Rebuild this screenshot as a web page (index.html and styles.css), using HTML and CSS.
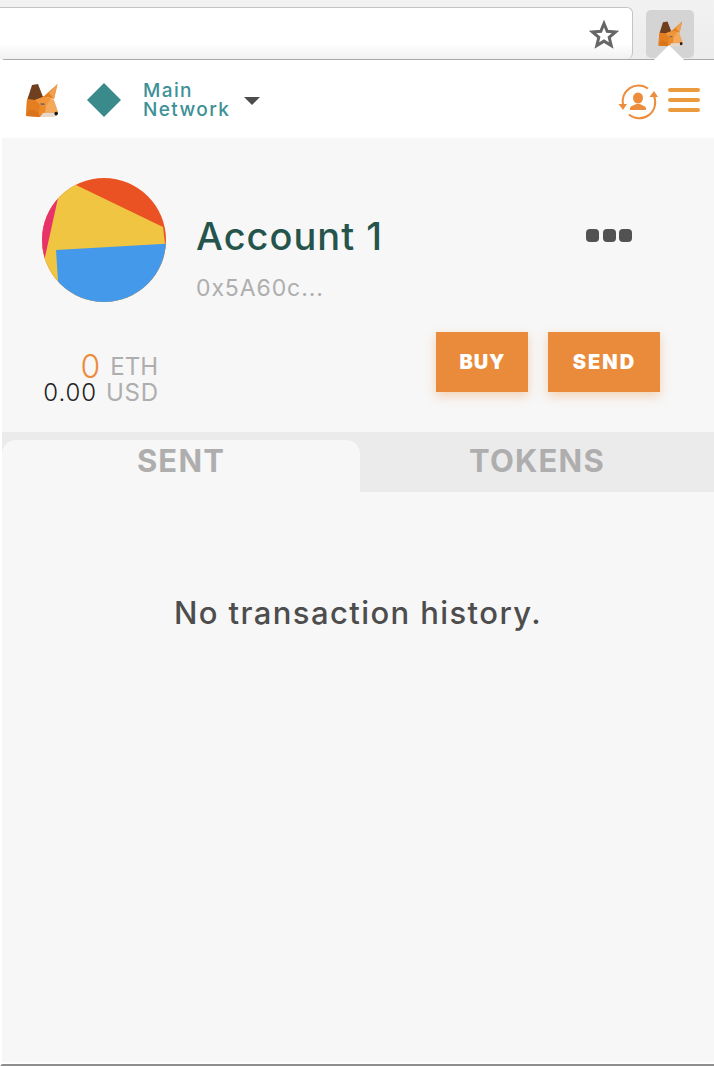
FILE: index.html
```html
<!DOCTYPE html>
<html lang="en">
<head>
    <meta charset="UTF-8">
    <meta name="viewport" content="width=device-width, initial-scale=1.0">
    <title>MetaMask</title>
    <link rel="stylesheet" href="styles.css">
</head>
<body>
<svg class="defs" width="0" height="0">
    <defs>
        <g id="fox">
            <polygon points="9,23 25,20 35,24 40,36 38,40 22,41 8,40" fill="#ea8a2a"/>
            <polygon points="25,21 39.5,8 36,23 33,22" fill="#e47f20"/>
            <polygon points="31,17 39.5,8 36,23" fill="#f0a050"/>
            <polygon points="9.5,23 14,9 20,8 25,21 17,24" fill="#6f3f1e"/>
            <polygon points="17,24 25,21 33,22 28,30 22,29" fill="#f0953a"/>
            <polygon points="8,40 9,24 17,24 22,29 20,40" fill="#e57e20"/>
            <polygon points="8,40 12,33 20,36 22,41" fill="#d9741c"/>
            <polygon points="28,30 33,22 36,24 40,36 27,37" fill="#f3a85a"/>
            <polygon points="25,37 39,36.5 36,41 22,41" fill="#e6d8cc"/>
            <polygon points="22,27.5 26,27 27,29 23,29" fill="#7a6a60"/>
            <circle cx="38.2" cy="37.6" r="1.8" fill="#161616"/>
        </g>
    </defs>
</svg>

<div class="chrome">
    <div class="address-bar">
        <svg class="star" viewBox="0 0 30 30" width="30" height="30">
            <polygon points="15,3.5 18.2,11.3 26.6,11.9 20.2,17.3 22.2,25.5 15,21.1 7.8,25.5 9.8,17.3 3.4,11.9 11.8,11.3" fill="none" stroke="#666" stroke-width="3"/>
        </svg>
    </div>
    <div class="ext-button">
        <svg viewBox="6 6 36 36" width="27" height="27"><use href="#fox"/></svg>
    </div>
</div>
<div class="caret"></div>

<div class="popup">
    <nav class="app-bar">
        <svg class="logo" viewBox="6 6 36 36" width="36" height="36"><use href="#fox"/></svg>
        <div class="network">
            <div class="diamond"></div>
            <div class="network-name">Main<br>Network</div>
            <div class="arrow-down"></div>
        </div>
        <div class="app-actions">
            <svg class="switch-icon" viewBox="0 0 40 40" width="40" height="40">
                <path d="M5 24 A16 16 0 0 1 30 7.5" fill="none" stroke="#ec8c3c" stroke-width="2"/>
                <path d="M36 15 A16 16 0 0 1 11 33.5" fill="none" stroke="#ec8c3c" stroke-width="2"/>
                <polygon points="0.5,23 9,23 5,29" fill="#ec8c3c"/>
                <polygon points="31.5,16 40,16 36,10" fill="#ec8c3c"/>
                <ellipse cx="20" cy="17" rx="5" ry="5.5" fill="#ec8c3c"/>
                <path d="M12 29 L12 27 C13 24.5 16 24.5 18 23 L22 23 C24 24.5 27 24.5 28 27 L28 29 Z" fill="#ec8c3c"/>
            </svg>
            <div class="menu-icon">
                <span></span><span></span><span></span>
            </div>
        </div>
    </nav>

    <section class="account">
        <div class="account-top">
            <svg class="identicon" viewBox="0 0 124 124" width="124" height="124">
                <defs><clipPath id="round"><circle cx="62" cy="62" r="62"/></clipPath></defs>
                <g clip-path="url(#round)">
                    <rect width="124" height="124" fill="#ea5123"/>
                    <polygon points="-5,-5 34,7 121,49 130,124 0,124 -5,124" fill="#f0c541"/>
                    <polygon points="16,20 3,79 -10,124 -10,-5" fill="#e8326a"/>
                    <polygon points="14,72 130,65.5 130,130 17,130 16,103" fill="#4499ea"/>
                </g>
            </svg>
            <div class="account-info">
                <div class="account-name">Account 1</div>
                <div class="account-address">0x5A60c...</div>
            </div>
            <div class="more-dots"><span></span><span></span><span></span></div>
        </div>
        <div class="account-bottom">
            <div class="balance">
                <div class="balance-row balance-eth"><span class="eth-value">0</span><span class="unit">ETH</span></div>
                <div class="balance-row"><span class="usd-value">0.00</span><span class="unit unit-usd">USD</span></div>
            </div>
            <div class="buttons">
                <button class="btn btn-buy">BUY</button>
                <button class="btn btn-send">SEND</button>
            </div>
        </div>
    </section>

    <div class="tabs">
        <div class="tab active">SENT</div>
        <div class="tab tab-tokens">TOKENS</div>
    </div>
    <div class="tab-content">
        <p class="empty">No transaction history.</p>
    </div>
</div>
</body>
</html>
```

FILE: styles.css
```css
* {
    box-sizing: border-box;
}

html, body {
    height: 100%;
}

body {
    margin: 0;
    font-family: Inter, "Liberation Sans", sans-serif;
    background-color: #fff;
    overflow: hidden;
    position: relative;
}

.defs {
    display: block;
    height: 0;
}

/* browser toolbar */
.chrome {
    height: 59px;
    background: linear-gradient(#f2f2f2, #ececec);
    padding-top: 7px;
    display: flex;
    align-items: flex-start;
}

.address-bar {
    width: 633px;
    height: 52px;
    background: linear-gradient(#fff 70%, #f1f1f1);
    border: 1px solid #c4c4c4;
    border-left: none;
    border-bottom: none;
    border-radius: 0 6px 6px 0;
    display: flex;
    justify-content: flex-end;
    padding: 12px 13px 0 0;
}

.ext-button {
    width: 48px;
    height: 48px;
    margin: 3px 0 0 13px;
    background-color: #d4d4d4;
    border-radius: 5px;
    display: flex;
    justify-content: center;
    padding-top: 10px;
}

.caret {
    position: absolute;
    left: 654px;
    top: 45px;
    width: 0;
    height: 0;
    border-left: 15px solid transparent;
    border-right: 15px solid transparent;
    border-bottom: 15px solid #fff;
    z-index: 2;
}

/* popup */
.popup {
    height: 1007px;
    display: flex;
    flex-direction: column;
    background-color: #f7f7f7;
    border-top: 1px solid #a9a9a9;
    border-bottom: 2px solid #8e8e8e;
    border-left: 2px solid #fff;
    border-radius: 5px 0 0 0;
}

.app-bar {
    height: 78px;
    margin-left: -2px;
    padding: 2px 14px 0 24px;
    background-color: #fff;
    display: flex;
    align-items: center;
    flex-shrink: 0;
}

.network {
    display: flex;
    align-items: center;
    margin-left: 32px;
}

.diamond {
    width: 24px;
    height: 24px;
    background-color: #3a8a8c;
    transform: rotate(45deg);
}

.network-name {
    margin-left: 27px;
    font-size: 19px;
    line-height: 19px;
    font-weight: 500;
    color: #3d9196;
    letter-spacing: 1.4px;
}

.arrow-down {
    width: 0;
    height: 0;
    margin-left: 14px;
    margin-top: 1px;
    border-left: 8px solid transparent;
    border-right: 8px solid transparent;
    border-top: 8px solid #4d4d4d;
}

.app-actions {
    margin-left: auto;
    display: flex;
    align-items: center;
    gap: 10px;
}

.switch-icon {
    margin-top: 2px;
}

.menu-icon {
    width: 32px;
    display: flex;
    flex-direction: column;
    gap: 6px;
}

.menu-icon span {
    height: 4px;
    border-radius: 2px;
    background-color: #ec9a3e;
}

/* account */
.account {
    height: 294px;
    flex-shrink: 0;
    padding: 40px 54px 0 40px;
}

.account-top {
    display: flex;
}

.account-info {
    margin-left: 30px;
    padding-top: 33px;
}

.account-name {
    font-size: 38px;
    line-height: 50px;
    font-weight: 500;
    color: #25544c;
    letter-spacing: 1px;
}

.account-address {
    margin-top: 13px;
    font-size: 23px;
    line-height: 28px;
    color: #aeaeae;
    letter-spacing: 0.9px;
}

.more-dots {
    margin: 51px 28px 0 auto;
    display: flex;
    gap: 3.5px;
    height: 13px;
}

.more-dots span {
    width: 13px;
    height: 13px;
    border-radius: 4px;
    background-color: #525252;
}

.account-bottom {
    display: flex;
    justify-content: space-between;
    align-items: flex-start;
    margin-top: 30px;
}

.balance {
    padding-top: 21px;
}

.balance-row {
    display: flex;
    justify-content: flex-end;
    align-items: baseline;
    height: 27px;
    line-height: 27px;
    width: 116px;
}

.balance-eth {
    align-items: center;
    height: 26px;
}

.eth-value {
    font-size: 32px;
    color: #ec8c3c;
    font-weight: 300;
    margin-right: 10px;
}

.usd-value {
    font-size: 24px;
    color: #222;
    font-weight: 300;
    letter-spacing: 0.9px;
    margin-right: 9px;
}

.unit {
    font-size: 24px;
    color: #aeaeae;
}

.unit-usd {
    letter-spacing: 0.7px;
    margin-right: -0.7px;
}

.buttons {
    display: flex;
    gap: 20px;
}

.btn {
    height: 60px;
    border: none;
    background-color: #ea8a3b;
    color: #fff;
    font-family: inherit;
    font-size: 20px;
    font-weight: 900;
    box-shadow: 0 4px 10px rgba(236, 140, 60, 0.35);
}

.btn-buy {
    width: 92px;
    padding: 0 0 0 1px;
    letter-spacing: 0.9px;
}

.btn-send {
    width: 112px;
    padding: 0 0 0 1px;
    letter-spacing: 2px;
}

/* tabs */
.tabs {
    height: 60px;
    flex-shrink: 0;
    display: flex;
    align-items: flex-end;
    background-color: #ebebeb;
}

.tab {
    height: 52px;
    text-align: center;
    font-size: 31px;
    line-height: 42px;
    font-weight: 700;
    color: #aeaeae;
    letter-spacing: 1.2px;
}

.tab.active {
    width: 358px;
    flex-shrink: 0;
    background-color: #f7f7f7;
    border-radius: 14px 14px 0 0;
}

.tab-tokens {
    flex: 1;
}

.tab-content {
    flex: 1;
    border-bottom: 2px solid #fff;
}

.empty {
    margin: 101px 0 0;
    text-align: center;
    font-size: 31px;
    line-height: 40px;
    font-weight: 500;
    color: #4d4d4d;
    letter-spacing: 1.4px;
}
```
